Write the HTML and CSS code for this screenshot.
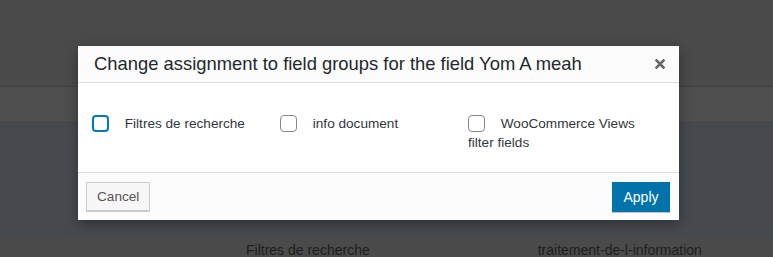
FILE: index.html
```html
<!DOCTYPE html>
<html lang="en">
<head>
  <meta charset="UTF-8">
  <meta name="viewport" content="width=device-width, initial-scale=1.0">
  <title>Change assignment</title>
  <link rel="stylesheet" href="styles.css">
</head>
<body>
  <div class="page">
    <div class="page-top"></div>
    <div class="page-tabs"></div>
    <div class="page-table"></div>
    <div class="page-row">
      <span class="cell cell-group">Filtres de recherche</span>
      <span class="cell cell-slug">traitement-de-l-information</span>
    </div>
  </div>

  <div class="dialog" role="dialog">
    <div class="dialog-header">
      <h2>Change assignment to field groups for the field Yom A meah</h2>
      <button type="button" class="dialog-close" aria-label="Close">
        <svg width="10" height="10" viewBox="0 0 10 10">
          <path d="M1.5 1.5 L8.5 8.5 M8.5 1.5 L1.5 8.5" stroke="#666" stroke-width="2.6" stroke-linecap="square"/>
        </svg>
      </button>
    </div>

    <div class="dialog-body">
      <label class="group-option">
        <input type="checkbox" class="focused"> Filtres de recherche
      </label>
      <label class="group-option">
        <input type="checkbox"> info document
      </label>
      <label class="group-option">
        <input type="checkbox"> WooCommerce Views filter fields
      </label>
    </div>

    <div class="dialog-footer">
      <button type="button" class="btn btn-secondary">Cancel</button>
      <button type="button" class="btn btn-primary">Apply</button>
    </div>
  </div>
</body>
</html>
```

FILE: styles.css
```css
body {
  font-family: "Liberation Sans", Arial, sans-serif;
  font-size: 13px;
  color: #32373c;
  margin: 0;
  width: 773px;
  height: 257px;
  overflow: hidden;
  position: relative;
  background-color: #4a4a4a;
}

.page-top {
  height: 86px;
  background-color: #4a4a4a;
  border-bottom: 1px solid #414141;
}

.page-tabs {
  height: 35px;
  background-color: #4e4e4e;
  border-bottom: 1px solid #434343;
}

.page-table {
  height: 112px;
  background-color: #464a4f;
}

.page-row {
  height: 22px;
  background-color: #4a4a4a;
  display: flex;
  padding-top: 7px;
  color: #1e1e1e;
  font-size: 14px;
}

.cell-group {
  margin-left: 246px;
}

.cell-slug {
  margin-left: 168px;
}

.dialog {
  position: absolute;
  left: 78px;
  top: 46px;
  width: 601px;
  background-color: #fff;
  box-shadow: 0 4px 12px rgba(0, 0, 0, 0.35);
}

.dialog-header {
  height: 36px;
  background-color: #fcfcfc;
  border-bottom: 1px solid #ddd;
  display: flex;
  align-items: center;
  justify-content: space-between;
  padding: 0 14px 0 16px;
}

.dialog-header h2 {
  margin: 0;
  font-size: 18.4px;
  font-weight: 400;
  color: #23282d;
}

.dialog-close {
  border: none;
  background: none;
  padding: 0;
  width: 10px;
  height: 10px;
  display: flex;
  cursor: pointer;
}

.dialog-body {
  height: 90px;
  display: grid;
  grid-template-columns: repeat(3, 188px);
  align-items: start;
  padding: 31px 0 0 14px;
  box-sizing: border-box;
  border-bottom: 1px solid #ddd;
}

.group-option {
  font-size: 13.6px;
  line-height: 19px;
  padding-right: 6px;
}

.group-option input {
  appearance: none;
  width: 17px;
  height: 17px;
  margin: 0 12px 0 0;
  vertical-align: -4px;
  border: 1px solid #7e8993;
  border-radius: 4px;
  background-color: #fff;
}

.group-option input.focused {
  border: 2px solid #007cba;
}

.dialog-footer {
  height: 47px;
  background-color: #fcfcfc;
  display: flex;
  align-items: center;
  justify-content: space-between;
  padding: 0 9px 0 8px;
}

.btn {
  font-family: inherit;
  font-size: 13.6px;
  height: 29px;
  padding: 0 10px;
  border-radius: 0;
  cursor: pointer;
}

.btn-secondary {
  width: 64px;
  background-color: #f7f7f7;
  color: #555;
  border: 1px solid #ccc;
  box-shadow: 0 1px 0 #ccc;
}

.btn-primary {
  width: 58px;
  height: 30px;
  font-size: 14px;
  background-color: #0073aa;
  color: #fff;
  border: none;
  box-shadow: 0 1px 0 #c0c4c8;
}
```
